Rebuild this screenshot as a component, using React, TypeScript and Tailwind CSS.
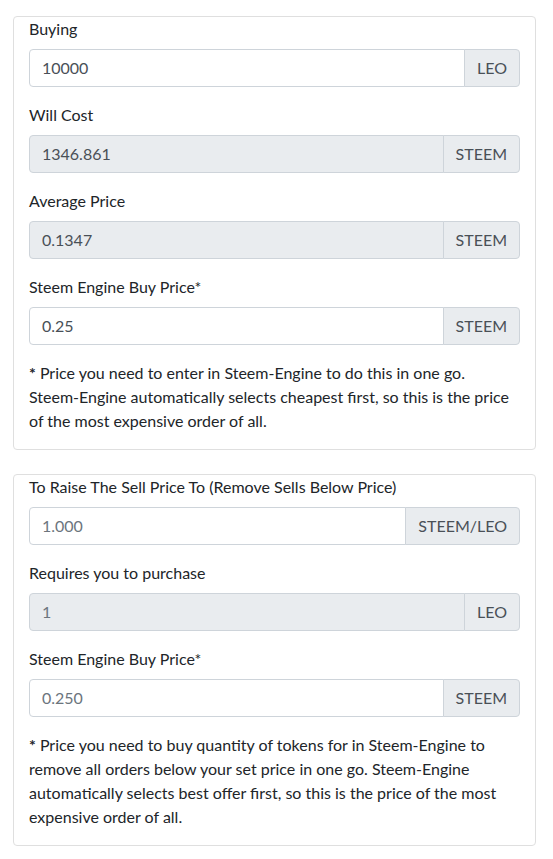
import React from 'react'

type GroupProps = {
  label: string
  value: string
  unit: string
  disabled?: boolean
  placeholder?: boolean
}

function InputGroup({ label, value, unit, disabled, placeholder }: GroupProps) {
  return (
    <div className="mb-4">
      <label className="mb-2 block leading-6">{label}</label>
      <div className="flex h-[38px]">
        <input
          readOnly
          disabled={disabled}
          placeholder={placeholder ? value : undefined}
          defaultValue={placeholder ? undefined : value}
          className={`min-w-0 flex-1 rounded-l-[4px] border border-[#ced4da] px-3 text-base text-[#495057] placeholder:text-[#6c757d] focus:outline-none ${
            disabled ? 'bg-[#e9ecef]' : 'bg-white'
          }`}
        />
        <span className="-ml-px flex items-center rounded-r-[4px] border border-[#ced4da] bg-[#e9ecef] px-3 text-[#495057]">
          {unit}
        </span>
      </div>
    </div>
  )
}

export default function App() {
  return (
    <div
      className="bg-white pt-4 text-base leading-6 text-[#212529]"
      style={{ fontFamily: 'Lato, sans-serif' }}
    >
      {/* Buy card */}
      <div className="ml-[13px] w-[523px] rounded-[4px] border border-[#dfdfdf] px-[15px]">
        <InputGroup label="Buying" value="10000" unit="LEO" />
        <InputGroup label="Will Cost" value="1346.861" unit="STEEM" disabled />
        <InputGroup label="Average Price" value="0.1347" unit="STEEM" disabled />
        <InputGroup label="Steem Engine Buy Price*" value="0.25" unit="STEEM" />
        <p className="mb-4 mt-4">
          <b>*</b> Price you need to enter in Steem-Engine to do this in one go.
          <br />
          Steem-Engine automatically selects cheapest first, so this is the price
          <br />
          of the most expensive order of all.
        </p>
      </div>

      {/* Raise price card */}
      <div className="ml-[13px] mt-6 w-[523px] rounded-[4px] border border-[#dfdfdf] px-[15px]">
        <InputGroup
          label="To Raise The Sell Price To (Remove Sells Below Price)"
          value="1.000"
          unit="STEEM/LEO"
          placeholder
        />
        <InputGroup label="Requires you to purchase" value="1" unit="LEO" disabled placeholder />
        <InputGroup label="Steem Engine Buy Price*" value="0.250" unit="STEEM" placeholder />
        <p className="mb-4 mt-4">
          <b>*</b> Price you need to buy quantity of tokens for in Steem-Engine to
          <br />
          remove all orders below your set price in one go. Steem-Engine
          <br />
          automatically selects best offer first, so this is the price of the most
          <br />
          expensive order of all.
        </p>
      </div>
    </div>
  )
}
